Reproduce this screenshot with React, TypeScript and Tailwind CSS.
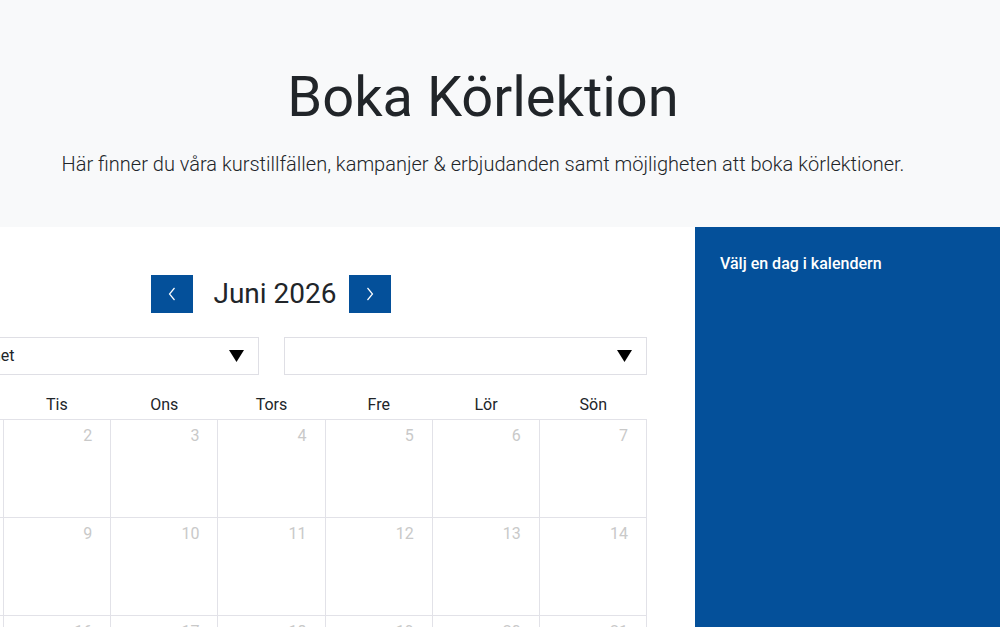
import React from "react";

const days = ["Mån", "Tis", "Ons", "Tors", "Fre", "Lör", "Sön"];

function Triangle() {
  return (
    <svg width="15" height="12" viewBox="0 0 15 12" className="shrink-0">
      <polygon points="0,0 15,0 7.5,12" fill="#000" />
    </svg>
  );
}

function Chevron({ dir }: { dir: "left" | "right" }) {
  return (
    <svg width="8" height="14" viewBox="0 0 8 14">
      {dir === "left" ? (
        <polyline points="6.5,1 1.5,7 6.5,13" fill="none" stroke="#fff" strokeWidth="1.2" />
      ) : (
        <polyline points="1.5,1 6.5,7 1.5,13" fill="none" stroke="#fff" strokeWidth="1.2" />
      )}
    </svg>
  );
}

export default function App() {
  const weeks: number[][] = [];
  for (let w = 0; w < 4; w++) {
    const row: number[] = [];
    for (let d = 1; d <= 7; d++) {
      row.push(w * 7 + d);
    }
    weeks.push(row);
  }
  return (
    <div className="w-[1000px] h-[627px] overflow-hidden font-['Roboto',sans-serif] text-[#212529]">
      <header className="h-[227px] bg-[#f8f9fa] flex flex-col items-center pt-[64px] pr-[34px]">
        <h1 className="text-[56px] leading-[1.2] font-normal">Boka Körlektion</h1>
        <p className="text-[20px] font-light leading-[1.5] mt-[18px]">
          Här finner du våra kurstillfällen, kampanjer &amp; erbjudanden samt möjligheten att boka körlektioner.
        </p>
      </header>
      <div className="flex h-[400px]">
        <div className="flex-1 overflow-hidden bg-white">
          <div className="w-[751px] -ml-[104px] pt-[48px]">
            <div className="flex items-center justify-center pr-[1px]">
              <button className="w-[42px] h-[38px] bg-[#04509a] flex items-center justify-center">
                <Chevron dir="left" />
              </button>
              <div className="text-[28px] leading-[38px] ml-[20px] mr-[12px]">Juni 2026</div>
              <button className="w-[42px] h-[38px] bg-[#04509a] flex items-center justify-center">
                <Chevron dir="right" />
              </button>
            </div>
            <div className="grid grid-cols-2 gap-[25px] mt-[24px]">
              <div className="h-[38px] border border-[#dfdfe5] flex items-center justify-between pl-[11px] pr-[14px] text-[16px]">
                <span>Välj behörighet</span>
                <Triangle />
              </div>
              <div className="h-[38px] border border-[#dfdfe5] flex items-center justify-end pl-[12px] pr-[14px] text-[16px]">
                <Triangle />
              </div>
            </div>
            <div className="grid grid-cols-7 mt-[15px] h-[29px] items-center text-[16px] font-normal">
              {days.map((d) => (
                <div key={d} className="text-center leading-[29px]">
                  {d}
                </div>
              ))}
            </div>
            <div className="grid grid-cols-7 border-t border-l border-[#e2e2e8]">
              {weeks.flat().map((n) => (
                <div
                  key={n}
                  className="h-[98px] border-r border-b border-[#e2e2e8] text-right pr-[18px] pt-[4px] text-[16px] leading-[24px] text-[#c9c9c9]"
                >
                  {n}
                </div>
              ))}
            </div>
          </div>
        </div>
        <aside className="w-[305px] bg-[#04509a] pl-[25px] pt-[25px] text-white text-[16px] font-medium leading-[24px]">
          Välj en dag i kalendern
        </aside>
      </div>
    </div>
  );
}
